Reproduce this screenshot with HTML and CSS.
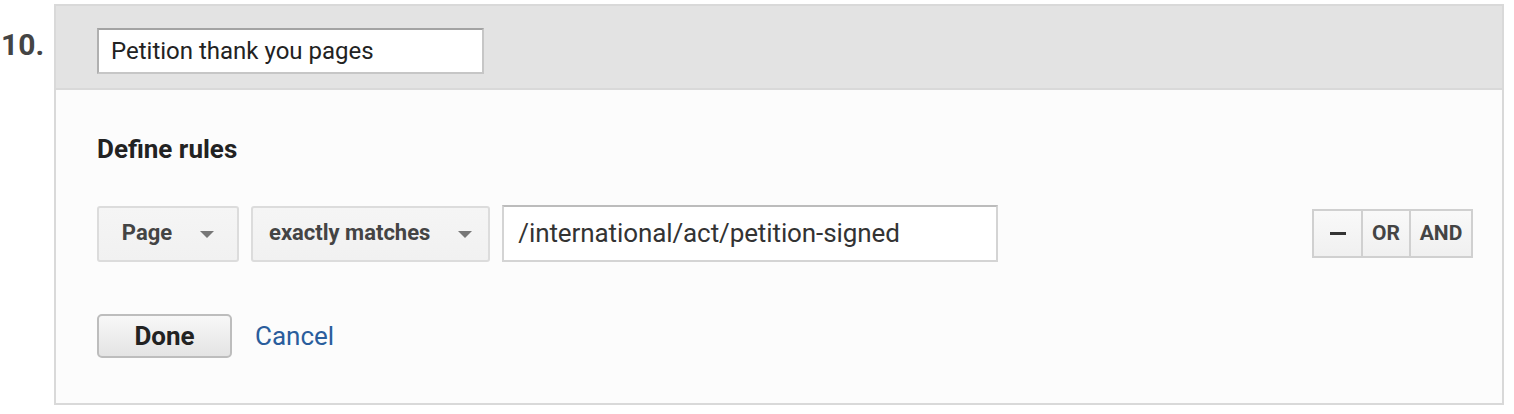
FILE: index.html
```html
<!DOCTYPE html>
<html>
<head>
<meta charset="utf-8">
<link rel="stylesheet" href="styles.css">
</head>
<body>
<div class="row">
  <div class="num">10.</div>
  <div class="card">
    <div class="card-head">
      <div class="name-input">Petition thank you pages</div>
    </div>
    <div class="card-body">
      <div class="title">Define rules</div>
      <div class="rule">
        <div class="select">
          <span class="sel-text">Page</span><span class="caret"></span>
        </div>
        <div class="select">
          <span class="sel-text">exactly matches</span><span class="caret"></span>
        </div>
        <div class="text-input">/international/act/petition-signed</div>
        <div class="spacer"></div>
        <div class="btn-group">
          <div class="gbtn minus"><span class="dash"></span></div>
          <div class="gbtn or">OR</div>
          <div class="gbtn and">AND</div>
        </div>
      </div>
      <div class="actions">
        <div class="done">Done</div>
        <a class="cancel" href="#">Cancel</a>
      </div>
    </div>
  </div>
</div>
</body>
</html>
```

FILE: styles.css
```css
* { box-sizing: border-box; }
html, body { margin: 0; padding: 0; background: #ffffff; }
body { font-family: Roboto, "Liberation Sans", Arial, sans-serif; color: #222; }

.row {
  display: flex;
  align-items: flex-start;
  padding-top: 4px;
  width: 1504px;
}
.num {
  width: 54px;
  flex: none;
  font-size: 30px;
  font-weight: 700;
  color: #444;
  line-height: 36px;
  margin-top: 23px;
  padding-left: 1px;
}
.card {
  flex: 1;
  border: 2px solid #d9d9d9;
  background: #fcfcfc;
}
.card-head {
  background: #e3e3e3;
  border-bottom: 2px solid #d9d9d9;
  padding: 22px 0 14px 41px;
}
.name-input {
  width: 387px;
  height: 46px;
  background: #fff;
  border: 2px solid #c6c6c6;
  border-top-color: #a3a3a3;
  border-left-color: #b0b0b0;
  font-size: 24px;
  line-height: 42px;
  padding-left: 12px;
  color: #222;
}
.card-body {
  padding: 44px 29px 45px 41px;
}
.title {
  font-size: 26px;
  font-weight: 700;
  line-height: 30px;
  color: #222;
}
.rule {
  display: flex;
  align-items: center;
  margin-top: 41px;
  gap: 12px;
}
.select {
  height: 56px;
  min-width: 142px;
  display: flex;
  align-items: center;
  justify-content: center;
  gap: 28px;
  padding: 0 16px;
  border: 2px solid #dcdcdc;
  border-radius: 3px;
  background: linear-gradient(#f5f5f5, #f1f1f1);
  font-size: 22px;
  font-weight: 700;
  color: #444;
}
.sel-text { margin-top: -3px; }
.caret {
  width: 0;
  height: 0;
  border-left: 7px solid transparent;
  border-right: 7px solid transparent;
  border-top: 7px solid #777;
  margin-top: 2px;
}
.text-input {
  width: 496px;
  height: 57px;
  background: #fff;
  border: 2px solid #d4d4d4;
  border-top-color: #bcbcbc;
  font-size: 26px;
  line-height: 53px;
  padding-left: 14px;
  color: #333;
  letter-spacing: -0.1px;
}
.spacer { flex: 1; }
.btn-group {
  display: flex;
  height: 49px;
  border: 2px solid #d0d0d0;
  background: linear-gradient(#f9f9f9, #f0f0f0);
}
.gbtn {
  display: flex;
  align-items: center;
  justify-content: center;
  font-size: 21px;
  font-weight: 700;
  color: #444;
  border-left: 2px solid #d0d0d0;
  padding-bottom: 2px;
}
.gbtn.minus { width: 47px; border-left: none; padding-bottom: 0; }
.gbtn.or { width: 48px; }
.gbtn.and { width: 62px; }
.dash {
  width: 16px;
  height: 3px;
  background: #333;
  display: block;
}
.actions {
  display: flex;
  align-items: center;
  gap: 23px;
  margin-top: 52px;
}
.done {
  width: 135px;
  height: 44px;
  border: 2px solid #bdbdbd;
  border-radius: 5px;
  background: linear-gradient(#f8f8f8, #e4e4e4);
  font-size: 26px;
  font-weight: 700;
  color: #222;
  display: flex;
  align-items: center;
  justify-content: center;
}
.cancel {
  font-size: 26px;
  color: #2a5d9c;
  text-decoration: none;
}
```
